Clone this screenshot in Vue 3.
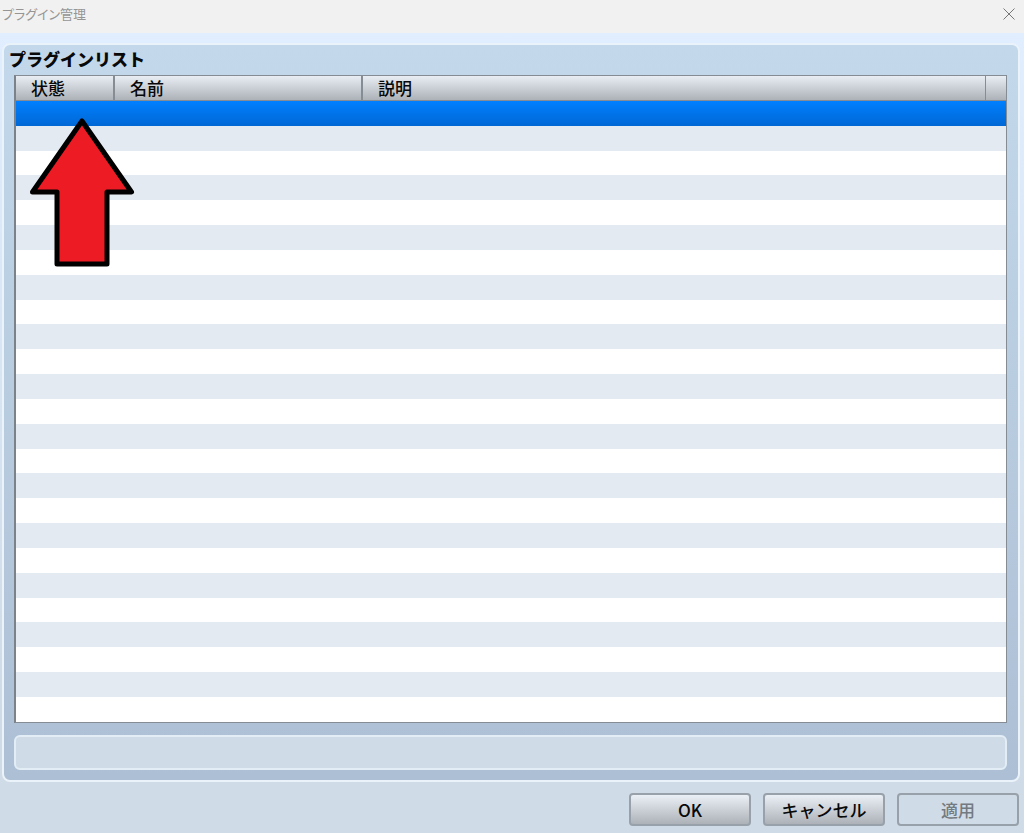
<script setup>
const columns = ['状態', '名前', '説明', '']
const rowCount = 25
</script>

<template>
  <div class="window">
    <header class="titlebar">
      <h1>プラグイン管理</h1>
      <button class="close" type="button" aria-label="閉じる">
        <svg viewBox="0 0 12 12" width="12" height="12"><path d="M0.5 0.5 11.5 11.5M11.5 0.5 0.5 11.5" /></svg>
      </button>
    </header>

    <main class="content">
      <section class="panel">
        <h2>プラグインリスト</h2>
        <div class="list">
          <table>
            <colgroup>
              <col class="c-status" /><col class="c-name" /><col /><col class="c-end" />
            </colgroup>
            <thead>
              <tr><th v-for="(c, i) in columns" :key="i" scope="col">{{ c }}</th></tr>
            </thead>
            <tbody>
              <tr v-for="r in rowCount" :key="r" :class="{ selected: r === 1 }">
                <td v-for="c in 4" :key="c"></td>
              </tr>
            </tbody>
          </table>
          <svg class="arrow" viewBox="0 0 104 148" width="104" height="148">
            <path d="M52 4 L101.500 75 H77 V147 H27 V75 H2.500 Z" />
          </svg>
        </div>
        <div class="description"></div>
      </section>
      <footer>
        <button type="button">OK</button>
        <button type="button">キャンセル</button>
        <button type="button" disabled>適用</button>
      </footer>
    </main>
  </div>
</template>

<style>
body { margin: 0; }
</style>

<style scoped>
.window {
  min-height: 100vh;
  display: flex;
  flex-direction: column;
  font-family: "Noto Sans CJK JP", "Noto Sans", sans-serif;
  color: #080808;
}
.titlebar {
  height: 33px;
  display: flex;
  justify-content: space-between;
  align-items: flex-start;
  background: #f1f1f1;
}
h1 {
  margin: 4px 0 0 2px;
  font-size: 13px;
  line-height: 20px;
  font-weight: 400;
  font-feature-settings: "palt";
  color: #959595;
}
.close {
  display: flex;
  margin: 0;
  padding: 8px 9px;
  border: 0;
  background: none;
}
.close path { fill: none; stroke: #777; stroke-width: 1; }
.content {
  flex: 1;
  display: flex;
  flex-direction: column;
  padding: 10px 4px 7px 2px;
  background: linear-gradient(#e1eeff, #cfdbe6 85%);
}
.panel {
  flex: 1;
  display: flex;
  flex-direction: column;
  padding: 0 11px 10px 10px;
  border: 2px solid #eaf2fa;
  border-radius: 8px;
  background: linear-gradient(#c3d8eb, #adbfd4);
}
h2 {
  margin: 0 0 2px -5px;
  font-size: 17px;
  line-height: 28px;
  font-weight: 900;
}
.list {
  position: relative;
  flex: 1;
  display: flex;
  border: 1px solid #868c94;
  border-left: 2px solid #7c828a;
}
table {
  width: 100%;
  table-layout: fixed;
  border-spacing: 0;
}
.c-status { width: 99px; }
.c-name { width: 248px; }
.c-end { width: 20px; }
th {
  box-sizing: border-box;
  height: 25px;
  padding: 0 0 0 15px;
  border-right: 2px solid #868c94;
  border-bottom: 1px solid #868c94;
  background: linear-gradient(#e8eef3, #adb2b9);
  text-align: left;
  font-size: 17px;
  line-height: 24px;
  font-weight: 500;
}
th:nth-child(3) { border-right-width: 1px; }
th:last-child { border-right: 0; }
td { padding: 0; }
tbody tr { background: #fff; }
tbody tr:nth-child(even) { background: #e3eaf1; }
tbody tr.selected { background: linear-gradient(#007fff, #0068d5); }
.arrow {
  position: absolute;
  left: 14px;
  top: 41px;
}
.arrow path {
  fill: #ed1c24;
  stroke: #000;
  stroke-width: 5;
  stroke-linejoin: round;
}
.arrow { overflow: visible; }
.description {
  height: 31px;
  margin-top: 12px;
  border: 2px solid #e3edf6;
  border-radius: 6px;
  background: #cfdbe6;
}
footer {
  display: flex;
  justify-content: flex-end;
  gap: 12px;
  padding: 11px 1px 0 0;
}
footer button {
  width: 122px;
  height: 33px;
  padding: 0;
  border: 2px solid #98a1aa;
  border-radius: 4px;
  background: linear-gradient(#eaf0f5, #adb2b9);
  font: 500 17px/24px "Noto Sans CJK JP", "Noto Sans", sans-serif;
  color: #080808;
}
footer button:disabled {
  background: #cfdbe6;
  color: #737a81;
}
</style>
